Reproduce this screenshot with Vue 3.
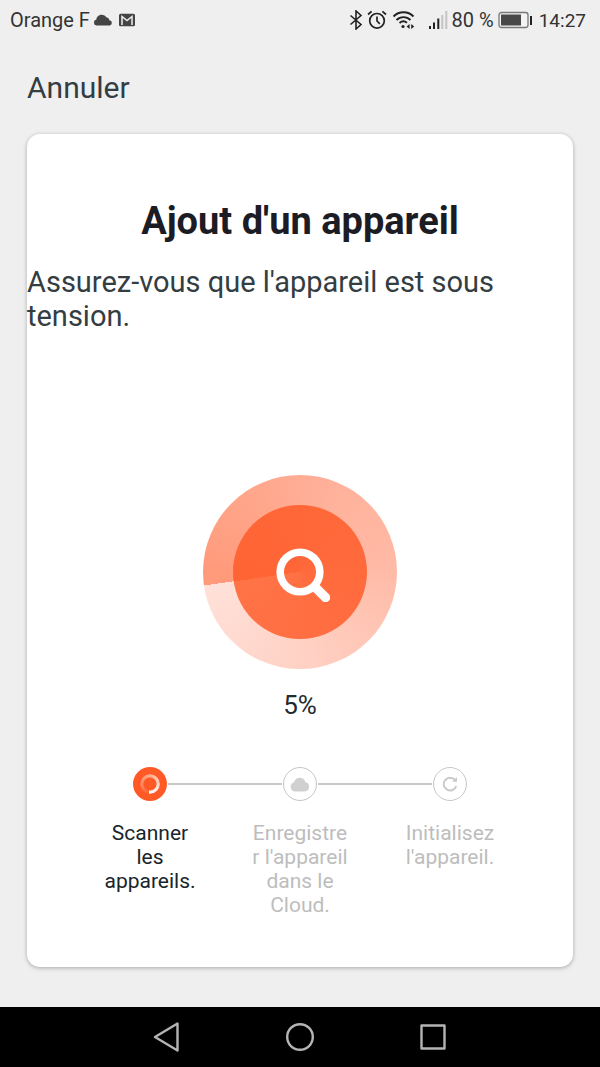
<script setup>
const progress = 5

const steps = [
  { id: 'scan', label: 'Scanner les appareils.', active: true },
  { id: 'cloud', label: "Enregistrer l'appareil dans le Cloud.", active: false },
  { id: 'init', label: "Initialisez l'appareil.", active: false },
]
</script>

<template>
  <div class="screen">
    <header class="status">
      <div class="status-group">
        <span>Orange F</span>
        <svg class="cloud" width="20" height="14" viewBox="0 0 20 14" aria-hidden="true">
          <path d="M3.500 12.500A3 3 0 0 1 3.300 6.600A5.600 5.600 0 0 1 13.500 4.200A4 4 0 0 1 16.500 7.200A2.700 2.700 0 0 1 16.800 12.500Z" fill="#444" />
        </svg>
        <svg class="mail" width="18" height="14" viewBox="0 0 18 14" aria-hidden="true">
          <rect x="1" y="0.700" width="16" height="12.600" rx="1.500" fill="#444" />
          <path d="M4 12V3.500L9 7.500L14 3.500V12" fill="none" stroke="#efefef" stroke-width="1.500" />
        </svg>
      </div>
      <div class="status-group">
        <svg width="14" height="20" viewBox="0 0 14 20" aria-hidden="true">
          <path d="M1.500 5.500L12 14.500L7 19V1L12 5.500L1.500 14.500" fill="none" stroke="#222" stroke-width="1.600" />
        </svg>
        <svg class="alarm" width="20" height="20" viewBox="0 0 20 20" fill="none" stroke="#222" stroke-width="1.700" aria-hidden="true">
          <circle cx="10" cy="10.800" r="7.300" />
          <path d="M10 6.500V11L12.800 13.800M1 4.500L4.600 1.400M19 4.500L15.400 1.400" />
        </svg>
        <svg class="wifi" width="24" height="20" viewBox="0 0 24 20" fill="none" stroke="#222" stroke-width="1.900" aria-hidden="true">
          <path d="M1.500 6.500A14 14 0 0 1 21.500 6.500M4.500 10A10 10 0 0 1 18.500 10M7.500 13A6 6 0 0 1 15 12.700" />
          <circle cx="11" cy="16.500" r="1.600" fill="#222" stroke="none" />
          <path d="M17.600 14V19L14.600 16.500ZM19.200 14V19L22.200 16.500Z" fill="#222" stroke="none" />
        </svg>
        <svg class="signal" width="20" height="20" viewBox="0 0 20 20" aria-hidden="true">
          <path d="M1 16H3V19H1ZM5 12.500H7V19H5ZM9.300 8.500H11.300V19H9.300Z" fill="#222" />
          <path d="M13.300 5H15.300V19H13.300ZM17.300 1H19.300V19H17.300Z" fill="#c4c4c4" />
        </svg>
        <span>80 %</span>
        <svg class="battery" width="36" height="18" viewBox="0 0 36 18" aria-hidden="true">
          <rect x="1" y="1.500" width="29" height="15" rx="2.500" fill="#f4f4f4" stroke="#777" stroke-width="1.300" />
          <rect x="3" y="3.500" width="20" height="11" fill="#484848" />
          <rect x="32" y="5" width="2" height="9" fill="#222" />
        </svg>
        <time>14:27</time>
      </div>
    </header>

    <button class="cancel" type="button">Annuler</button>

    <main class="card">
      <h1>Ajout d'un appareil</h1>
      <p class="hint">Assurez-vous que l'appareil est sous tension.</p>

      <div class="radar">
        <div class="radar-core">
          <svg width="60" height="60" viewBox="0 0 60 60" fill="none" stroke="#fff" aria-hidden="true">
            <circle cx="30" cy="30" r="19.800" stroke-width="7.600" />
            <path d="M45 45L55.500 55.500" stroke-width="9.500" stroke-linecap="round" />
          </svg>
        </div>
      </div>

      <p class="percent">{{ progress }}%</p>

      <ol class="steps">
        <li v-for="step in steps" :key="step.id" class="step" :class="{ active: step.active }">
          <div class="track">
            <span class="line"></span>
            <span class="dot">
              <span v-if="step.id === 'scan'" class="spinner"></span>
              <svg v-else-if="step.id === 'cloud'" width="20" height="16" viewBox="0 0 20 16" aria-hidden="true">
                <path d="M5.500 15.500A4.700 4.700 0 0 1 4 6.300A6 6 0 0 1 14.300 3.800Q15.200 4.800 15.300 6.300A4.650 4.650 0 0 1 14.800 15.500Z" fill="#d0d0d0" />
              </svg>
              <svg v-else width="18" height="18" viewBox="0 0 18 18" aria-hidden="true">
                <path d="M14 5A6.400 6.400 0 1 0 15.200 11" fill="none" stroke="#c9c9c9" stroke-width="2" />
                <path d="M16 2V6.800H11.200Z" fill="#c9c9c9" />
              </svg>
            </span>
            <span class="line"></span>
          </div>
          <span class="label">{{ step.label }}</span>
        </li>
      </ol>
    </main>

    <nav class="navbar">
      <button type="button" aria-label="Retour">
        <svg width="30" height="32" viewBox="0 0 30 32" fill="none" stroke="#b4b4b4" stroke-width="2.400" stroke-linejoin="round">
          <path d="M25.500 2.500V29.500L3 16Z" />
        </svg>
      </button>
      <button type="button" aria-label="Accueil">
        <svg width="30" height="32" viewBox="0 0 30 32" fill="none" stroke="#b4b4b4" stroke-width="2.400">
          <circle cx="15" cy="16" r="12.800" />
        </svg>
      </button>
      <button type="button" aria-label="Applications récentes">
        <svg width="30" height="32" viewBox="0 0 30 32" fill="none" stroke="#b4b4b4" stroke-width="2.400" stroke-linejoin="round">
          <rect x="3.500" y="4.500" width="23" height="23" />
        </svg>
      </button>
    </nav>
  </div>
</template>

<style>
body {
  background: #efefef;
}
</style>

<style scoped>
.screen {
  display: flex;
  flex-direction: column;
  min-height: 100vh;
  background: #efefef;
  color: #333d42;
  font-family: Roboto, "Liberation Sans", sans-serif;
}

button {
  margin: 0;
  padding: 0;
  border: 0;
  background: none;
  color: inherit;
  font: inherit;
}

svg {
  display: block;
  flex: none;
}

.status {
  display: flex;
  align-items: center;
  justify-content: space-between;
  height: 40px;
  padding: 0 14px 0 10px;
  color: #333;
  font-size: 20px;
}

.status-group {
  display: flex;
  align-items: center;
  white-space: nowrap;
}

.status time {
  font-size: 19px;
}

.cloud {
  margin-left: 3px;
}

.mail {
  margin-left: 5px;
}

.alarm {
  margin-left: 4px;
}

.wifi {
  margin-left: 5px;
}

.signal {
  margin: 0 4px 0 12px;
}

.battery {
  margin: 0 5px 0 4px;
}

.cancel {
  align-self: flex-start;
  margin: 28px 27px;
  font-size: 30px;
  line-height: 40px;
}

.card {
  flex: 1;
  display: flex;
  flex-direction: column;
  align-items: center;
  margin: -2px 27px 40px;
  padding-bottom: 48px;
  border-radius: 13px;
  background: #fff;
  box-shadow: 0 1px 4px rgba(0, 0, 0, 0.3);
}

h1 {
  margin: 64px 0 0;
  color: #1c1c24;
  font-size: 38px;
  font-weight: 700;
  line-height: 46px;
}

.hint {
  align-self: stretch;
  margin: 21px 0 0;
  font-size: 29px;
  line-height: 34px;
}

.radar,
.radar-core {
  display: flex;
  align-items: center;
  justify-content: center;
  border-radius: 50%;
}

.radar {
  width: 194px;
  height: 194px;
  margin-top: 142px;
  background: conic-gradient(from 262deg, #ff9979, #ffb29c 35%, #ffb9a5 50%, #ffd0c3 75%, #ffe1d9);
}

.radar-core {
  width: 134px;
  height: 134px;
  background: conic-gradient(from 262deg, #ff6434, #ff6a3c 50%, #ff7347);
}

.percent {
  margin: 20px 0 0;
  color: #222b30;
  font-size: 26px;
  line-height: 32px;
}

.steps {
  display: grid;
  grid-template-columns: repeat(3, 150px);
  margin: 46px 0 0;
  padding: 0;
  list-style: none;
}

.step {
  display: flex;
  flex-direction: column;
  align-items: center;
  color: #bdbdbd;
}

.step.active {
  color: #18252c;
}

.track {
  display: flex;
  align-items: center;
  gap: 1px;
  width: 100%;
}

.line {
  flex: 1;
  height: 2px;
  background: #c9c9c9;
}

.step:first-child .line:first-child,
.step:last-child .line:last-child {
  background: none;
}

.dot {
  box-sizing: border-box;
  display: flex;
  align-items: center;
  justify-content: center;
  width: 34px;
  height: 34px;
  border: 1px solid #c6c6c6;
  border-radius: 50%;
}

.active .dot {
  border: 0;
  background: #ff5a25;
}

.spinner {
  width: 20px;
  height: 20px;
  border-radius: 50%;
  background: conic-gradient(from 185deg, rgba(255, 255, 255, 0.05), rgba(255, 255, 255, 0.5) 50%, #fff);
  mask: radial-gradient(circle, transparent 6px, #000 7px);
}

.label {
  width: 98px;
  margin-top: 20px;
  font-size: 21px;
  line-height: 24px;
  text-align: center;
  overflow-wrap: break-word;
}

.navbar {
  display: flex;
  align-items: center;
  justify-content: center;
  gap: 103px;
  height: 60px;
  background: #000;
}
</style>
